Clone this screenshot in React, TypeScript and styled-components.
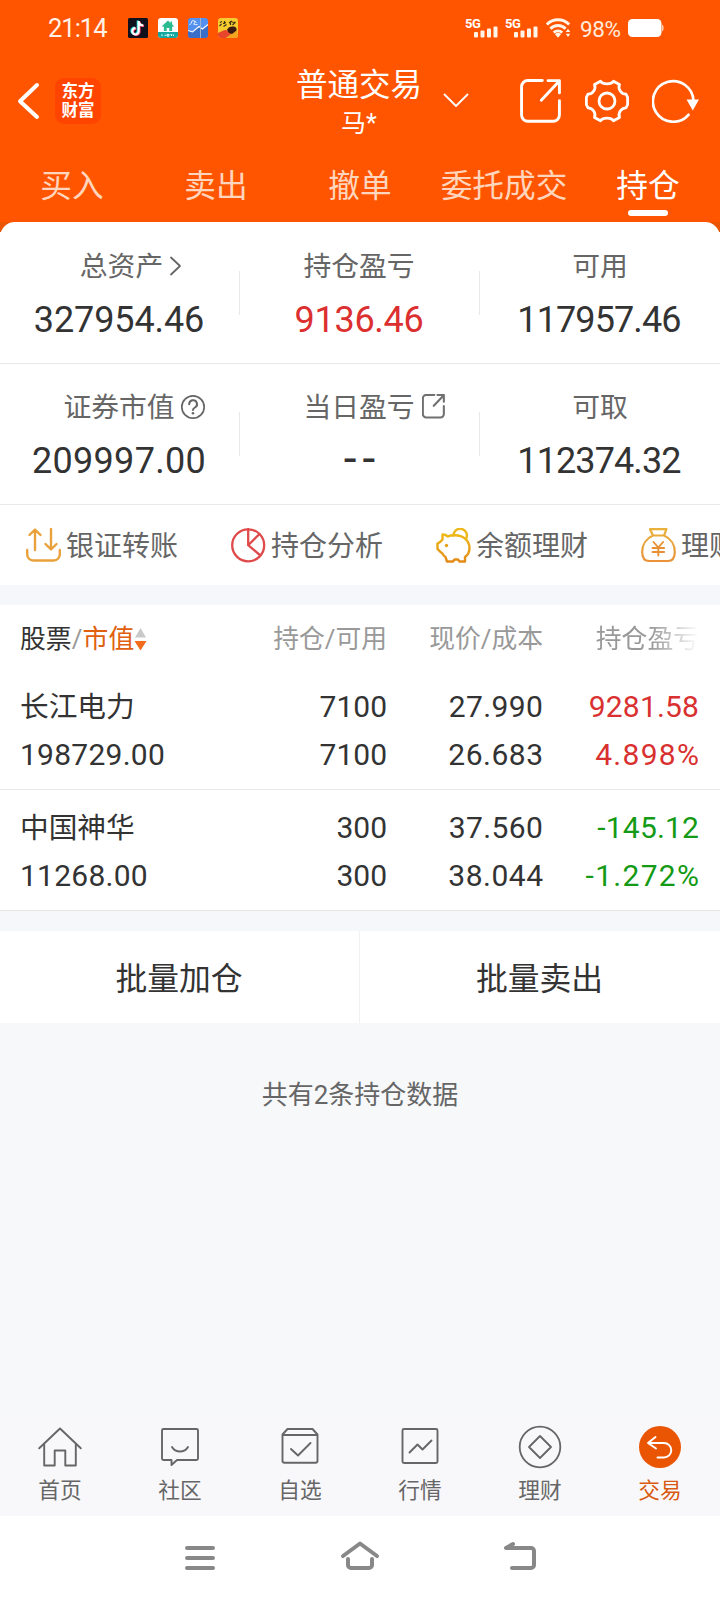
import React from "react";
import styled, { createGlobalStyle } from "styled-components";

const GlobalStyle = createGlobalStyle`
  * { box-sizing: border-box; }
  html, body { margin: 0; padding: 0; }
  body {
    background: #f7f8fa;
    font-family: Roboto, "Noto Sans CJK SC", sans-serif;
    font-weight: 400;
    color: #333;
  }
  svg { display: block; flex: none; }
`;

const Screen = styled.div`
  width: 720px;
  height: 1600px;
  display: flex;
  flex-direction: column;
  overflow: hidden;
  background: #f7f8fa;
`;

const Header = styled.header`
  height: 222px;
  background: #ff5500;
  color: #fff;
`;

const StatusBar = styled.div`
  height: 56px;
  padding: 0 56px 0 48px;
  display: flex;
  align-items: center;
`;

const Clock = styled.span`
  width: 80px;
  font-size: 25.5px;
  line-height: 30px;
  letter-spacing: -1px;
  color: #fff1e6;
`;

const Notifications = styled.div`
  display: flex;
  gap: 10px;
`;

const StatusRight = styled.div`
  margin-left: auto;
  display: flex;
  align-items: center;
`;

const Signal = styled.div`
  width: 40px;
  height: 22px;
  display: flex;
  align-items: flex-start;
`;

const SignalLabel = styled.span`
  width: 8px;
  margin-left: -1px;
  margin-right: 1px;
  font-size: 13px;
  font-weight: 700;
  line-height: 13px;
  letter-spacing: -0.4px;
`;

const Battery = styled.span`
  width: 57px;
  padding: 2px 0 0 9px;
  font-size: 22.5px;
  line-height: 26px;
  letter-spacing: -0.4px;
  color: #ffeadb;
  white-space: nowrap;
`;

const TitleBar = styled.div`
  height: 90px;
  display: flex;
  align-items: center;
`;

const TitleLeft = styled.div`
  width: 295px;
  padding-left: 17px;
  display: flex;
  align-items: center;
  gap: 15px;
`;

const Brand = styled.div`
  width: 46px;
  height: 46px;
  border-radius: 9px;
  background: #ff4400;
  display: flex;
  flex-direction: column;
  justify-content: center;
  align-items: center;
  font-size: 16.5px;
  line-height: 19.5px;
  font-weight: 700;
`;

const TitleBlock = styled.div`
  width: 128px;
  padding-top: 5px;
  display: flex;
  flex-direction: column;
  align-items: center;
`;

const Title = styled.div`
  font-size: 31.5px;
  line-height: 39px;
  white-space: nowrap;
`;

const Account = styled.div`
  font-size: 25px;
  line-height: 37px;
`;

const TitleActions = styled.div`
  display: flex;
  align-items: center;
`;

const ActionSlot = styled.span<{ $left: number }>`
  margin-left: ${(p) => p.$left}px;
`;

const Tabs = styled.nav`
  height: 76px;
  display: flex;
`;

const Tab = styled.div<{ $active?: boolean }>`
  width: 144px;
  padding-top: 18px;
  display: flex;
  flex-direction: column;
  align-items: center;
  font-size: 31.7px;
  line-height: 46px;
  color: ${(p) => (p.$active ? "#fff" : "#ffd5bd")};
  &::after {
    content: "";
    width: 40px;
    height: 6px;
    border-radius: 3px;
    background: ${(p) => (p.$active ? "#fff" : "transparent")};
  }
`;

const CardBacking = styled.div`
  background: linear-gradient(#e95405 0 10px, #fff 10px);
`;

const Card = styled.section`
  height: 363px;
  border-radius: 15px 15px 0 0;
  background: #fff;
`;

const SummaryRow = styled.div`
  height: 141px;
  display: flex;
  border-bottom: 1px solid #e8e8e8;
  &:first-child { height: 142px; }
`;

const SummaryCell = styled.div`
  width: 240px;
  padding-top: 25px;
  display: flex;
  flex-direction: column;
  align-items: center;
  background: linear-gradient(#e8e8e8, #e8e8e8) no-repeat 239px 49px / 1px 44px;
  &:last-child { background: none; }
  ${SummaryRow} + ${SummaryRow} > & {
    padding-top: 24px;
    background-position: 239px 48px;
  }
`;

const SummaryLabel = styled.div<{ $shift?: number }>`
  display: flex;
  align-items: center;
  font-size: 27.8px;
  line-height: 40px;
  color: #666;
  transform: translateX(${(p) => p.$shift ?? -1}px);
`;

/* Zero-width slot: the icon hangs after the label, so the label stays centred. */
const Hanging = styled.span<{ $gap: number }>`
  width: 0;
  svg { margin: -3px 0 0 ${(p) => p.$gap}px; }
`;

const SummaryValue = styled.div<{ $up?: boolean; $spacing?: number }>`
  margin-top: 11px;
  padding-right: 2px;
  font-size: 36px;
  line-height: 44px;
  letter-spacing: ${(p) => p.$spacing ?? 0}px;
  color: ${(p) => (p.$up ? "#dc2f2f" : "#333")};
`;

const EmptyValue = styled(SummaryValue)`
  margin-top: 8px;
  padding: 0 0 0 5px;
  font-size: 46px;
  letter-spacing: 6px;
`;

const Tools = styled.div`
  height: 80px;
  padding: 1px 0 0 26px;
  display: flex;
  align-items: center;
  overflow: hidden;
`;

const Tool = styled.div`
  flex: none;
  width: 205px;
  padding-top: 3px;
  display: flex;
  align-items: center;
  gap: 5px;
  font-size: 28px;
  line-height: 40px;
  color: #666;
  svg { margin-bottom: 4px; }
`;

const Divider = styled.div`
  height: 20px;
  background: #f6f7fa;
`;

const Table = styled.section`
  background: #fff;
`;

const TableRow = styled.div`
  display: grid;
  grid-template-columns: 200px 167px 156px 156px;
  padding: 0 21px 0 20px;
`;

const TableHead = styled(TableRow)`
  height: 64px;
  padding-top: 15px;
  font-size: 25.8px;
  line-height: 38px;
  color: #999;
`;

const HeadCell = styled.div<{ $fade?: boolean }>`
  text-align: right;
  white-space: nowrap;
  mask-image: ${(p) => (p.$fade ? "linear-gradient(90deg, #000 108px, transparent 156px)" : "none")};
`;

const SortHead = styled.div`
  height: 38px;
  display: flex;
  align-items: center;
  white-space: nowrap;
`;

const Dark = styled.span`
  color: #333;
`;

const Slash = styled.span`
  width: 11px;
  text-align: center;
`;

const Accent = styled.span`
  color: #e0600f;
`;

const Holding = styled(TableRow)`
  height: 121px;
  padding-top: 14px;
  border-bottom: 1px solid #e8e8e8;
  font-size: 30px;
  line-height: 48px;
`;

const HoldingCell = styled.div<{ $left?: boolean; $tone?: "up" | "down" }>`
  text-align: ${(p) => (p.$left ? "left" : "right")};
  color: ${(p) => (p.$tone === "up" ? "#d93030" : p.$tone === "down" ? "#149a14" : "#333")};
`;

const Figure = styled.div<{ $spacing?: number }>`
  letter-spacing: ${(p) => p.$spacing ?? 0}px;
  margin-right: ${(p) => -(p.$spacing ?? 0)}px;
`;

const StockName = styled.div`
  height: 48px;
  font-size: 28.7px;
`;

const Batch = styled.section`
  height: 92px;
  display: flex;
  background: #fff;
`;

const BatchButton = styled.button`
  width: 360px;
  border: 0;
  padding: 0 1px 2px 0;
  background: none;
  border-right: 1px solid #f1f1f3;
  font: inherit;
  font-size: 31.8px;
  color: #333;
  &:last-child { border-right: 0; }
`;

const Note = styled.p`
  margin: 52px 0 0;
  text-align: center;
  font-size: 26px;
  line-height: 40px;
  color: #666;
`;

const BottomNav = styled.nav`
  height: 100px;
  margin-top: auto;
  display: flex;
  background: #f8f8fb;
`;

const NavItem = styled.div<{ $active?: boolean }>`
  width: 120px;
  padding-top: 7px;
  display: flex;
  flex-direction: column;
  align-items: center;
  font-size: 21.7px;
  line-height: 30px;
  color: ${(p) => (p.$active ? "#d95a10" : "#666")};
  svg { margin-bottom: 7px; }
`;

const SystemNav = styled.footer`
  height: 84px;
  padding: 0 180px;
  display: flex;
  justify-content: space-between;
  align-items: center;
  background: #fff;
`;

const line = (color: string, width: number) => ({
  fill: "none",
  stroke: color,
  strokeWidth: width,
  strokeLinecap: "round" as const,
  strokeLinejoin: "round" as const,
});

const notePath = "M10.4 3v10.2a3.2 3.2 0 1 1-3.2-3.2M10.4 3.2c.3 2.4 2 4 4.6 4.1";

const MusicApp = () => (
  <svg width="20" height="20" viewBox="0 0 20 20">
    <rect width="20" height="20" rx="1.5" fill="#10101c" />
    <g fill="none" strokeWidth="2.2">
      <path d={notePath} stroke="#25e5e5" transform="translate(-.6 -.4)" />
      <path d={notePath} stroke="#f5325f" transform="translate(1.1 .6)" />
      <path d={notePath} stroke="#fff" transform="translate(.3 .1)" />
    </g>
  </svg>
);

const HouseApp = () => (
  <svg width="20" height="20" viewBox="0 0 20 20">
    <rect width="20" height="20" rx="3" fill="#fff" />
    <path d="M0 14h20v3a3 3 0 0 1-3 3H3a3 3 0 0 1-3-3z" fill="#13a7a0" />
    <path d="M10 2.4 4 8l1 1 .9-.7V13h2.8v-3h2.6v3h2.8V8.3l.9.7 1-1-1.9-1.7V3.5h-1.6v1.4z" fill="#2abb91" />
    <path d="M4 16.2v2M6.5 17.3h1.5M9 16.4h2v1.7H9zM12.5 16.5h1v1.5M15 16.3l.8 1.7" stroke="#e6ffff" strokeWidth="1" fill="none" />
  </svg>
);

const ChartApp = () => (
  <svg width="20" height="20" viewBox="0 0 20 20">
    <rect width="20" height="20" rx="3" fill="#5490ee" />
    <path d="M0 12.5 4.5 14 11 8.5 14.5 11 20 7v10a3 3 0 0 1-3 3H3a3 3 0 0 1-3-3z" fill="#3a6fc9" />
    <path d="M0 12.5 4.5 14 11 8.5 14.5 11 20 6.5" stroke="#fff" strokeWidth="1.1" fill="none" />
    <path d="M12.5 0v20" stroke="#9fb4cc" strokeWidth="1" />
    <path d="M1.5 6.5c1.5-.3 2-1.3 2-2.5a1.7 1.7 0 1 1 2 2c1 .6 2.5.8 4 .5M6.5 3l2 1.5" stroke="#eaf3ff" strokeWidth="1" fill="none" />
  </svg>
);

const GameApp = () => (
  <svg width="20" height="20" viewBox="0 0 20 20">
    <rect width="20" height="20" rx="3" fill="#f6ca31" />
    <path d="M0 15c3-1 5-3 8-3l6 4-6 4H3a3 3 0 0 1-3-3z" fill="#e8452c" />
    <path d="m8 20 5-4 6-4 1 5a3 3 0 0 1-3 3z" fill="#f2a31f" />
    <path d="M9 12c1-3 4-4 7-3.5 2 .5 3 2 2.5 4L14 16l-3-1z" fill="#3a1a10" />
    <path d="M2 4.5 4 3.5M1.5 8l2-2M5 5.5l3-1M5.5 8.5l3-2M6.5 3v3M11 5l3-2M12.5 3v4M14.5 7l3-3M14 4l3 .5" stroke="#3b3214" strokeWidth="1.2" fill="none" />
  </svg>
);

const SignalBars = () => (
  <svg width="24" height="22" viewBox="0 0 24 22">
    <g fill="#fff4e8">
      <rect x="0" y="15" width="4" height="5.5" rx="1" />
      <rect x="6.5" y="13.5" width="4" height="7" rx="1" />
      <rect x="13" y="11.5" width="4" height="9" rx="1" />
      <rect x="19.5" y="9.5" width="4" height="11" rx="1" />
    </g>
  </svg>
);

const Wifi = () => (
  <svg width="25" height="20" viewBox="0 0 25 20">
    <g fill="none" stroke="#fff4e8" strokeWidth="2.9">
      <path d="M.8 6.5a15.500 15.500 0 0 1 22.400 0" />
      <path d="M4.4 10.800a10.500 10.500 0 0 1 15.200 0" />
      <path d="M7.8 14.600a6 6 0 0 1 8.400 0" />
    </g>
    <path d="m12 19.8-3-3.600a4.500 4.500 0 0 1 6 0z" fill="#fff4e8" />
    <path d="m22 10.800 2.300 3.200h-4.600zM22 19l2.300-3.200h-4.600z" fill="#fff4e8" />
  </svg>
);

const BatteryIcon = () => (
  <svg width="36" height="18" viewBox="0 0 36 18">
    <rect width="33.5" height="18" rx="4.5" fill="#fff" />
    <path d="M34 5.5c2.200.5 2.200 6.500 0 7z" fill="#ffc9a8" />
  </svg>
);

const BackChevron = () => (
  <svg width="23" height="38" viewBox="0 0 23 38">
    <path d="M20 3 3 19.2 20 35" {...line("#fff", 4)} />
  </svg>
);

const DownChevron = () => (
  <svg width="26" height="16" viewBox="0 0 26 16">
    <path d="M1.5 1.5 13 13 24.5 1.5" {...line("#fff", 1.8)} />
  </svg>
);

const Share = ({ size, color, width }: { size: number; color: string; width: number }) => (
  <svg width={size} height={size * 1.06} viewBox="0 0 40 42.4">
    <path d="M21.5 1.5H7.5a6 6 0 0 0-6 6v27.300a6 6 0 0 0 6 6H32a6 6 0 0 0 6-6V21M20.500 20.500 37 3M27 1.600h11v11.800" {...line(color, width)} />
  </svg>
);

const gearPath =
  "M15.5 2.2c2.3 3.5 10.7 3.5 13 0l6 3.2c-1.8 4.5 1.7 9.8 6.5 9.8l1.6 3.1v7.4l-1.6 3.1c-4.8 0-8.3 5.3-6.5 9.8l-6 3.2c-2.3-3.5-10.7-3.5-13 0l-6-3.2c1.8-4.5-1.7-9.8-6.5-9.8l-1.6-3.1v-7.4l1.6-3.1c4.8 0 8.3-5.3 6.5-9.8z";

const Gear = () => (
  <svg width="44" height="44" viewBox="0 0 44 44">
    <path d={gearPath} {...line("#fff", 2.8)} />
    <circle cx="22" cy="22" r="8" {...line("#fff", 2.8)} />
  </svg>
);

const Refresh = () => (
  <svg width="48" height="44" viewBox="0 0 48 44">
    <path d="M41.5 22A20.300 20.300 0 1 0 36.500 35.800" {...line("#fff", 2.7)} />
    <path d="M34.500 20.500H47l-6.200 11z" fill="#fff" />
  </svg>
);

const SmallArrow = () => (
  <svg width="12" height="20" viewBox="0 0 12 20">
    <path d="m1.5 1.5 9 8.500-9 8.500" {...line("#666", 1.8)} />
  </svg>
);

const Help = () => (
  <svg width="26" height="26" viewBox="0 0 26 26">
    <circle cx="13" cy="13" r="11.200" {...line("#666", 1.7)} />
    <path d="M9.200 10.200a3.900 3.900 0 1 1 5.800 3.300c-1.500.8-2 1.300-2 2.500" {...line("#666", 2)} />
    <circle cx="13" cy="19.300" r="1.300" fill="#666" />
  </svg>
);

const Transfer = () => (
  <svg width="35" height="35" viewBox="0 0 35 35">
    <path d="M1.200 22v4.500a6 6 0 0 0 6 6h20.600a6 6 0 0 0 6-6V22M9 22V2M3.500 7 9 1.500 14.500 7M25 1v20M19.500 16l5.500 5.500 5.500-5.500" {...line("#e9a23b", 2.4)} />
  </svg>
);

const Pie = () => (
  <svg width="35" height="35" viewBox="0 0 35 35">
    <path d="M17.200 1.200v16L29.400 27.500M17.200 17.200 28.500 6" {...line("#df4a4a", 2.3)} />
    <circle cx="17.200" cy="17.300" r="16" {...line("#df4a4a", 2.3)} />
  </svg>
);

const Piggy = () => (
  <svg width="35" height="35" viewBox="0 0 35 35">
    <defs>
      <linearGradient id="pig" x1="0" y1="0" x2="0" y2="1">
        <stop offset="0" stopColor="#eeb914" />
        <stop offset="1" stopColor="#e38a17" />
      </linearGradient>
    </defs>
    <path d="M6.500 6.500c2 0 4 .6 5.300 2 2-1.200 4-1.300 7-1.300C27.500 7.200 33.500 12.500 33.500 20c0 4-1.800 7-4.500 9v4.500h-5.500l-1.500-2h-3.500l-1.500 2H11l-1.500-4.500c-1.500-1-2.500-2.200-3.500-4C4 24 3.500 22.500 1.500 21v-5.500C4 15 5 13.500 6.500 11.500z" {...line("url(#pig)", 2.4)} />
    <path d="M17.500 7.500a6.700 6.700 0 1 1 12.300 3.600" {...line("#edb81b", 2.4)} />
    <circle cx="10.500" cy="17.500" r="1.700" fill="#e5a01c" />
  </svg>
);

const MoneyBag = () => (
  <svg width="35" height="35" viewBox="0 0 35 35">
    <defs>
      <linearGradient id="bag" x1="0" y1="0" x2="0" y2="1">
        <stop offset="0" stopColor="#e9b03a" />
        <stop offset="1" stopColor="#e9923a" />
      </linearGradient>
    </defs>
    <path d="M9 1.200h16.500L23 7.500H12zM12 7.500C5 10.500 1.200 17 1.200 24c0 6.500 2.300 9 7 9h18.600c4.700 0 7-2.500 7-9 0-7-3.800-13.500-10.800-16.500" {...line("url(#bag)", 2.2)} />
    <path d="m12.500 14 4.800 5.500 4.800-5.500M11.500 20h11.600M11.500 24h11.600M17.300 20v7.500" {...line("#e99035", 1.9)} />
  </svg>
);

const SortArrows = () => (
  <svg width="13" height="24" viewBox="0 0 13 24">
    <path d="M6.500 1 12 10.500H1z" fill="#c9c9c9" />
    <path d="M.5 14H12.500L6.500 23.500z" fill="#f26a1c" />
  </svg>
);

const navIcons: Record<string, React.ReactNode> = {
  home: (
    <g {...line("#666", 1.9)}>
      <path d="M2.200 25.300 23 5.500l20.800 19.800" />
      <path d="M7.200 21.500v21h10.500V27.500h10.600v15h10.500v-21" />
    </g>
  ),
  chat: (
    <path d="M6.500 6h33a1.500 1.500 0 0 1 1.500 1.500v28a1.500 1.500 0 0 1-1.500 1.500H20l-5.500 5V37h-8A1.500 1.500 0 0 1 5 35.500v-28A1.500 1.500 0 0 1 6.500 6zM15 24c3.500 6 12.500 6 16 0" {...line("#666", 1.9)} />
  ),
  pick: (
    <path d="M10.500 6h25l5 5.500v26.300a2 2 0 0 1-2 2h-31a2 2 0 0 1-2-2V11.500zM5.500 12h35M14 26l7 6.500L33.500 20" {...line("#666", 1.9)} />
  ),
  market: (
    <path d="M7 6h32a1.500 1.500 0 0 1 1.500 1.500v31A1.500 1.500 0 0 1 39 40H7a1.500 1.500 0 0 1-1.500-1.500v-31A1.500 1.500 0 0 1 7 6zM12.500 29.500l8-8 5 5 9-9" {...line("#666", 1.9)} />
  ),
  wealth: (
    <g {...line("#666", 1.8)}>
      <circle cx="23" cy="24" r="20.300" />
      <path d="M23 13 34 24 23 35 12 24z" />
    </g>
  ),
  trade: (
    <g>
      <circle cx="23" cy="24" r="21" fill="#ea5504" />
      <path d="M18.500 14 11 20l8 5.500M11.500 20H27a7 7 0 0 1 0 14.500h-6.500" {...line("#fff", 2)} />
    </g>
  ),
};

const NavIcon = ({ name }: { name: string }) => (
  <svg width="46" height="46" viewBox="0 0 46 46">{navIcons[name]}</svg>
);

const holdings = [
  { name: "长江电力", value: "198729.00", qty: "7100", free: "7100", price: "27.990", cost: "26.683", profit: "9281.58", rate: "4.898%", tone: "up" as const },
  { name: "中国神华", value: "11268.00", qty: "300", free: "300", price: "37.560", cost: "38.044", profit: "-145.12", rate: "-1.272%", tone: "down" as const },
];

const nav = [
  ["home", "首页"],
  ["chat", "社区"],
  ["pick", "自选"],
  ["market", "行情"],
  ["wealth", "理财"],
  ["trade", "交易"],
];

export default function App() {
  return (
    <Screen>
      <GlobalStyle />
      <Header>
        <StatusBar>
          <Clock>21:14</Clock>
          <Notifications>
            <MusicApp />
            <HouseApp />
            <ChartApp />
            <GameApp />
          </Notifications>
          <StatusRight>
            <Signal><SignalLabel>5G</SignalLabel><SignalBars /></Signal>
            <Signal><SignalLabel>5G</SignalLabel><SignalBars /></Signal>
            <Wifi />
            <Battery>98%</Battery>
            <BatteryIcon />
          </StatusRight>
        </StatusBar>
        <TitleBar>
          <TitleLeft>
            <BackChevron />
            <Brand><span>东方</span><span>财富</span></Brand>
          </TitleLeft>
          <TitleBlock>
            <Title>普通交易</Title>
            <Account>马*</Account>
          </TitleBlock>
          <TitleActions>
            <ActionSlot $left={20}><DownChevron /></ActionSlot>
            <ActionSlot $left={51}><Share size={41.5} color="#fff" width={2.8} /></ActionSlot>
            <ActionSlot $left={23.5}><Gear /></ActionSlot>
            <ActionSlot $left={23}><Refresh /></ActionSlot>
          </TitleActions>
        </TitleBar>
        <Tabs>
          <Tab>买入</Tab>
          <Tab>卖出</Tab>
          <Tab>撤单</Tab>
          <Tab>委托成交</Tab>
          <Tab $active>持仓</Tab>
        </Tabs>
      </Header>

      <CardBacking>
        <Card>
          <SummaryRow>
            <SummaryCell>
              <SummaryLabel $shift={1.5}>总资产<Hanging $gap={6}><SmallArrow /></Hanging></SummaryLabel>
              <SummaryValue $spacing={-0.1}>327954.46</SummaryValue>
            </SummaryCell>
            <SummaryCell>
              <SummaryLabel>持仓盈亏</SummaryLabel>
              <SummaryValue $up $spacing={-0.3}>9136.46</SummaryValue>
            </SummaryCell>
            <SummaryCell>
              <SummaryLabel $shift={0}>可用</SummaryLabel>
              <SummaryValue $spacing={-0.9}>117957.46</SummaryValue>
            </SummaryCell>
          </SummaryRow>
          <SummaryRow>
            <SummaryCell>
              <SummaryLabel>证券市值<Hanging $gap={5}><Help /></Hanging></SummaryLabel>
              <SummaryValue $spacing={0.3}>209997.00</SummaryValue>
            </SummaryCell>
            <SummaryCell>
              <SummaryLabel>当日盈亏<Hanging $gap={7}><Share size={23} color="#707070" width={3.6} /></Hanging></SummaryLabel>
              <EmptyValue $spacing={6}>--</EmptyValue>
            </SummaryCell>
            <SummaryCell>
              <SummaryLabel $shift={0}>可取</SummaryLabel>
              <SummaryValue $spacing={-0.9}>112374.32</SummaryValue>
            </SummaryCell>
          </SummaryRow>
          <Tools>
            <Tool><Transfer />银证转账</Tool>
            <Tool><Pie />持仓分析</Tool>
            <Tool><Piggy />余额理财</Tool>
            <Tool><MoneyBag />理财</Tool>
          </Tools>
        </Card>
      </CardBacking>

      <Divider />

      <Table>
        <TableHead>
          <SortHead>
            <Dark>股票</Dark><Slash>/</Slash><Accent>市值</Accent><SortArrows />
          </SortHead>
          <HeadCell>持仓/可用</HeadCell>
          <HeadCell>现价/成本</HeadCell>
          <HeadCell $fade>持仓盈亏</HeadCell>
        </TableHead>
        {holdings.map((h) => (
          <Holding key={h.name}>
            <HoldingCell $left>
              <StockName>{h.name}</StockName>
              <Figure $spacing={0.25}>{h.value}</Figure>
            </HoldingCell>
            <HoldingCell>
              <Figure>{h.qty}</Figure>
              <Figure>{h.free}</Figure>
            </HoldingCell>
            <HoldingCell>
              <Figure $spacing={0.4}>{h.price}</Figure>
              <Figure $spacing={0.5}>{h.cost}</Figure>
            </HoldingCell>
            <HoldingCell $tone={h.tone}>
              <Figure $spacing={0.2}>{h.profit}</Figure>
              <Figure $spacing={1.3}>{h.rate}</Figure>
            </HoldingCell>
          </Holding>
        ))}
      </Table>

      <Divider />

      <Batch>
        <BatchButton>批量加仓</BatchButton>
        <BatchButton>批量卖出</BatchButton>
      </Batch>

      <Note>共有2条持仓数据</Note>

      <BottomNav>
        {nav.map(([icon, label]) => (
          <NavItem key={icon} $active={icon === "trade"}>
            <NavIcon name={icon} />
            {label}
          </NavItem>
        ))}
      </BottomNav>

      <SystemNav>
        <svg width="40" height="40" viewBox="0 0 40 40">
          <path d="M7 10h26M7 20h26M7 30h26" {...line("#888", 4)} />
        </svg>
        <svg width="40" height="40" viewBox="0 0 40 40">
          <path d="M3 18 20 5.500 37 18M8 21v6a3 3 0 0 0 3 3h18a3 3 0 0 0 3-3v-6" {...line("#888", 4)} />
        </svg>
        <svg width="40" height="40" viewBox="0 0 40 40">
          <path d="M13 6 6 10H31a3 3 0 0 1 3 3v14a3 3 0 0 1-3 3H12" {...line("#888", 4)} />
        </svg>
      </SystemNav>
    </Screen>
  );
}
